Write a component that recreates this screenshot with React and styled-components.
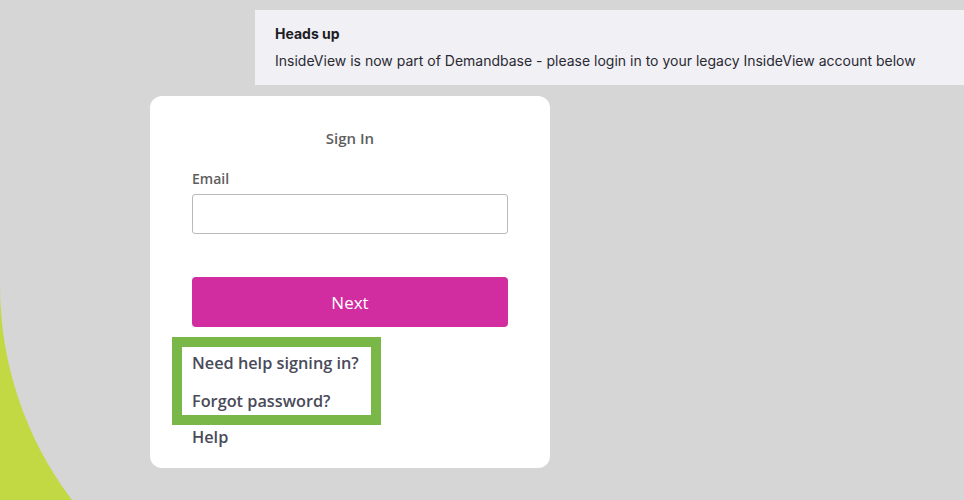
import React from 'react';
import styled, {createGlobalStyle} from 'styled-components';

const GlobalStyle = createGlobalStyle`
  html, body {
    margin: 0;
    padding: 0;
    background: #d6d6d6;
  }
  * {
    box-sizing: border-box;
  }
`;

const Page = styled.div`
  position: relative;
  width: 964px;
  height: 500px;
  overflow: hidden;
  background: #d6d6d6;
  padding-top: 10px;
  display: flex;
  flex-direction: column;
`;

const Swoosh = styled.svg`
  position: absolute;
  left: 0;
  top: 0;
  z-index: 0;
`;

const Banner = styled.div`
  position: relative;
  z-index: 1;
  margin-left: 255px;
  height: 75px;
  background: #f1f0f5;
  padding: 14px 20px;
  display: flex;
  flex-direction: column;
  gap: 7px;
  font-family: Inter, "Liberation Sans", sans-serif;
  font-size: 14px;
  line-height: 20px;
`;

const BannerTitle = styled.div`
  font-weight: 700;
  color: #1d1d25;
`;

const BannerText = styled.div`
  color: #2a2a33;
`;

const Card = styled.div`
  position: relative;
  z-index: 1;
  margin: 11px 0 0 150px;
  width: 400px;
  background: #fff;
  border-radius: 12px;
  padding: 32px 42px 19px;
  display: flex;
  flex-direction: column;
`;

const Heading = styled.h2`
  margin: 0;
  text-align: center;
  font-family: "Open Sans", sans-serif;
  font-size: 15px;
  line-height: 20px;
  font-weight: 600;
  color: #5e5e5e;
`;

const Label = styled.label`
  margin-top: 21px;
  font-family: "Open Sans", sans-serif;
  font-size: 14px;
  line-height: 20px;
  font-weight: 600;
  color: #5e5e5e;
`;

const Input = styled.input`
  margin-top: 5px;
  height: 40px;
  width: 100%;
  border: 1px solid #b9b9b9;
  border-radius: 3px;
  background: #fff;
  outline: none;
`;

const Button = styled.button`
  margin-top: 43px;
  height: 50px;
  width: 100%;
  border: none;
  border-radius: 4px;
  background: #d22da0;
  color: #fff;
  font-family: "Open Sans", sans-serif;
  font-size: 17px;
  font-weight: 500;
`;

const Highlight = styled.div`
  margin: 10px 0 0 -20px;
  width: 209px;
  border: 10px solid #79b748;
  padding: 4px 9px 2px 10px;
  display: flex;
  flex-direction: column;
  gap: 14px;
`;

const LinkText = styled.a`
  display: block;
  font-family: "Open Sans", sans-serif;
  font-size: 16.3px;
  line-height: 24px;
  font-weight: 600;
  color: #4a4a5a;
  text-decoration: none;
  white-space: nowrap;
`;

export default function App() {
  return (
    <>
      <GlobalStyle />
      <Page>
        <Swoosh width="964" height="500" viewBox="0 0 964 500">
          <path d="M0 285 A356 356 0 0 0 72 500 L0 500 Z" fill="#c2d944" />
        </Swoosh>
        <Banner>
          <BannerTitle>Heads up</BannerTitle>
          <BannerText>InsideView is now part of Demandbase - please login in to your legacy InsideView account below</BannerText>
        </Banner>
        <Card>
          <Heading>Sign In</Heading>
          <Label>Email</Label>
          <Input type="text" />
          <Button type="button">Next</Button>
          <Highlight>
            <LinkText href="#">Need help signing in?</LinkText>
            <LinkText href="#">Forgot password?</LinkText>
          </Highlight>
          <LinkText href="#">Help</LinkText>
        </Card>
      </Page>
    </>
  );
}
